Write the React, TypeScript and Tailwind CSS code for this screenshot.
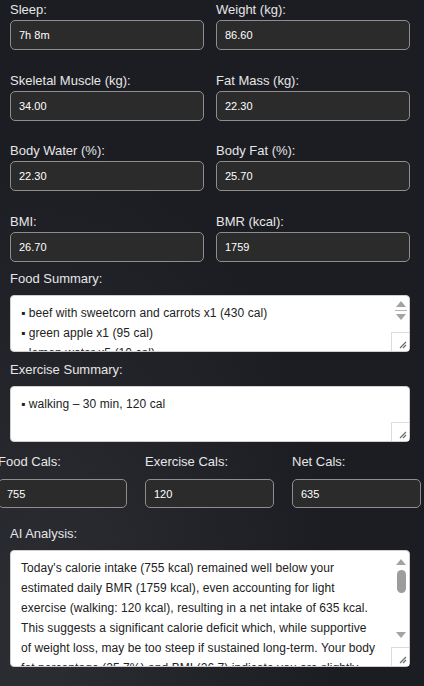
import React from "react";

const font = { fontFamily: '"Liberation Sans", Arial, sans-serif' };

function Field({ label, value, className = "" }: { label: string; value: string; className?: string }) {
  return (
    <div className={"flex flex-col " + className}>
      <label className="text-[13px] leading-[15px] text-[#e6e6e6]">{label}</label>
      <input
        readOnly
        value={value}
        className="mt-[3px] h-[30px] rounded-[5px] border border-[#8e8e8e] bg-[#2b2b2b] px-[8px] text-[11px] text-white outline-none"
      />
    </div>
  );
}

function Grip() {
  return (
    <div className="absolute bottom-[1px] right-[1px] flex h-[19px] w-[18px] items-end justify-end border-l border-t border-[#dcdcdc] bg-white">
      <svg width="10" height="10" viewBox="0 0 10 10" className="mb-[2px] mr-[2px]">
        <path d="M9 3 L3 9 M9 6 L6 9" stroke="#6b6b6b" strokeWidth="1.2" fill="none" />
      </svg>
    </div>
  );
}

function Up() {
  return (
    <svg width="10" height="6" viewBox="0 0 10 6">
      <path d="M5 0 L10 6 L0 6 Z" fill="#a3a3a3" />
    </svg>
  );
}

function Down() {
  return (
    <svg width="10" height="6" viewBox="0 0 10 6">
      <path d="M0 0 L10 0 L5 6 Z" fill="#a3a3a3" />
    </svg>
  );
}

function Area({
  label,
  value,
  h,
  bar,
}: {
  label: string;
  value: string;
  h: string;
  bar?: "small" | "tall";
}) {
  return (
    <div className="flex flex-col">
      <label className="text-[13px] leading-[15px] text-[#e6e6e6]">{label}</label>
      <div className={"relative mt-[9px] " + h}>
        <textarea
          readOnly
          value={value}
          className="h-full w-full resize-none overflow-hidden rounded-[4px] border border-[#cfcfcf] bg-white py-[7px] pl-[10px] pr-[29px] text-[12px] leading-[20px] tracking-[0.07px] text-[#222] outline-none"
        />
        {bar === "small" && (
          <div className="absolute right-[1px] top-[6px] flex w-[16px] flex-col items-center">
            <Up />
            <div className="mt-[3px] h-[1px] w-[12px] bg-[#b5b5b5]" />
            <div className="mt-[3px]">
              <Down />
            </div>
          </div>
        )}
        {bar === "tall" && (
          <div className="absolute right-[1px] top-[9px] flex w-[16px] flex-col items-center">
            <Up />
            <div className="mt-[5px] h-[23px] w-[9px] rounded-full bg-[#9d9d9d]" />
            <div className="mt-[39px]">
              <Down />
            </div>
          </div>
        )}
        <Grip />
      </div>
    </div>
  );
}

const food = [
  "▪ beef with sweetcorn and carrots x1 (430 cal)",
  "▪ green apple x1 (95 cal)",
  "▪ lemon water x5 (10 cal)",
  "▪ coffee with milk x1 (220 cal)",
].join("\n");

const analysis =
  "Today's calorie intake (755 kcal) remained well below your estimated daily BMR (1759 kcal), even accounting for light exercise (walking: 120 kcal), resulting in a net intake of 635 kcal. This suggests a significant calorie deficit which, while supportive of weight loss, may be too steep if sustained long-term. Your body fat percentage (25.7%) and BMI (26.7) indicate you are slightly overweight, so a moderate deficit is reasonable, but very low intake can reduce muscle mass and energy levels. Your sleep of 7h 8m is adequate for recovery. Consider adding a protein-rich meal and more vegetables to bring intake closer to 1300–1500 kcal.";

export default function App() {
  return (
    <div
      style={font}
      className="min-h-[686px] overflow-hidden bg-[#1c1d23] bg-[radial-gradient(ellipse_at_8%_92%,#2d2e33_0%,#24252b_28%,#1c1d23_55%)] pl-[10px] pr-[14px] pt-[2px]"
    >
      <div className="grid grid-cols-2 gap-x-[12px] gap-y-[22.5px]">
        <Field label="Sleep:" value="7h 8m" />
        <Field label="Weight (kg):" value="86.60" />
        <Field label="Skeletal Muscle (kg):" value="34.00" />
        <Field label="Fat Mass (kg):" value="22.30" />
        <Field label="Body Water (%):" value="22.30" />
        <Field label="Body Fat (%):" value="25.70" />
        <Field label="BMI:" value="26.70" />
        <Field label="BMR (kcal):" value="1759" />
      </div>

      <div className="mt-[9px]">
        <Area label="Food Summary:" value={food} h="h-[57px]" bar="small" />
      </div>
      <div className="mt-[10.5px]">
        <Area label="Exercise Summary:" value={"▪ walking – 30 min, 120 cal"} h="h-[56px]" />
      </div>

      <div className="ml-[-12px] mt-[11.5px] flex w-[424px] gap-[18px] [&_input]:mt-[10.5px] [&_input]:h-[29px]">
        <Field label="Food Cals:" value="755" className="w-[129px]" />
        <Field label="Exercise Cals:" value="120" className="w-[129px]" />
        <Field label="Net Cals:" value="635" className="w-[129px]" />
      </div>

      <div className="mt-[17.5px]">
        <Area label="AI Analysis:" value={analysis} h="h-[117px]" bar="tall" />
      </div>
    </div>
  );
}
